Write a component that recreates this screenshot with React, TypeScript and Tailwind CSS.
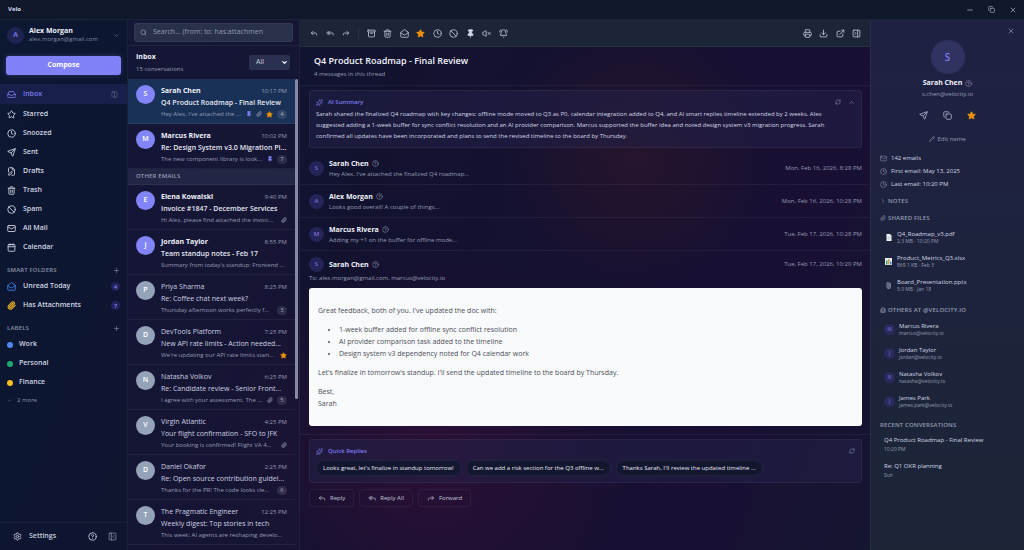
import { useState } from 'react';
import type { ReactNode } from 'react';
import {
    Archive, Ban, BellRing, Building2, Calendar, ChevronDown, ChevronRight, ChevronUp, CircleHelp, Clock,
    Columns2, Copy, Download, ExternalLink, FilePen, Forward, Inbox, Mail, MailOpen, Minus, PanelLeftClose,
    PanelRightClose, Paperclip, Pencil, Pin, Plus, Printer, RefreshCw, Reply, ReplyAll, Search, Send,
    Settings, Sparkles, Star, Trash2, VolumeX, X,
} from 'lucide-react';
import type { LucideIcon } from 'lucide-react';

interface Thread {
    id: number;
    from: string;
    time: string;
    subject: string;
    snippet: string;
    unread?: boolean;
    pinned?: boolean;
    attachment?: boolean;
    starred?: boolean;
    count?: number;
}

const navItems: { label: string; icon: LucideIcon }[] = [
    { label: 'Starred', icon: Star },
    { label: 'Snoozed', icon: Clock },
    { label: 'Sent', icon: Send },
    { label: 'Drafts', icon: FilePen },
    { label: 'Trash', icon: Trash2 },
    { label: 'Spam', icon: Ban },
    { label: 'All Mail', icon: Mail },
    { label: 'Calendar', icon: Calendar },
];

const labels = [
    { name: 'Work', color: 'bg-[#4f86f0]' },
    { name: 'Personal', color: 'bg-[#1fa870]' },
    { name: 'Finance', color: 'bg-[#fbbf24]' },
];

const pinnedThreads: Thread[] = [
    { id: 1, from: 'Sarah Chen', time: '10:17 PM', subject: 'Q4 Product Roadmap - Final Review', snippet: "Hey Alex, I've attached the ...", unread: true, pinned: true, attachment: true, starred: true, count: 4 },
    { id: 2, from: 'Marcus Rivera', time: '10:02 PM', subject: 'Re: Design System v3.0 Migration Pl...', snippet: 'The new component library is look...', unread: true, pinned: true, count: 7 },
];

const otherThreads: Thread[] = [
    { id: 3, from: 'Elena Kowalski', time: '9:40 PM', subject: 'Invoice #1847 - December Services', snippet: 'Hi Alex, please find attached the invoic...', unread: true, attachment: true },
    { id: 4, from: 'Jordan Taylor', time: '8:55 PM', subject: 'Team standup notes - Feb 17', snippet: "Summary from today's standup: Frontend ...", unread: true },
    { id: 5, from: 'Priya Sharma', time: '8:25 PM', subject: 'Re: Coffee chat next week?', snippet: 'Thursday afternoon works perfectly f...', count: 3 },
    { id: 6, from: 'DevTools Platform', time: '7:25 PM', subject: 'New API rate limits - Action needed...', snippet: "We're updating our API rate limits start...", starred: true },
    { id: 7, from: 'Natasha Volkov', time: '6:25 PM', subject: 'Re: Candidate review - Senior Front...', snippet: 'I agree with your assessment. The ...', attachment: true, count: 5 },
    { id: 8, from: 'Virgin Atlantic', time: '4:25 PM', subject: 'Your flight confirmation - SFO to JFK', snippet: 'Your booking is confirmed! Flight VA 4...', attachment: true },
    { id: 9, from: 'Daniel Okafor', time: '2:25 PM', subject: 'Re: Open source contribution guidel...', snippet: 'Thanks for the PR! The code looks cle...', count: 6 },
    { id: 10, from: 'The Pragmatic Engineer', time: '12:25 PM', subject: 'Weekly digest: Top stories in tech', snippet: 'This week: AI agents are reshaping develo...' },
];

const messages = [
    { from: 'Sarah Chen', snippet: "Hey Alex, I've attached the finalized Q4 roadmap...", date: 'Mon, Feb 16, 2026, 8:28 PM' },
    { from: 'Alex Morgan', snippet: 'Looks good overall! A couple of things...', date: 'Mon, Feb 16, 2026, 10:28 PM' },
    { from: 'Marcus Rivera', snippet: 'Adding my +1 on the buffer for offline mode...', date: 'Tue, Feb 17, 2026, 10:28 PM' },
];

const people = [
    { name: 'Marcus Rivera', email: 'marcus@velocity.io' },
    { name: 'Jordan Taylor', email: 'jordan@velocity.io' },
    { name: 'Natasha Volkov', email: 'natasha@velocity.io' },
    { name: 'James Park', email: 'james.park@velocity.io' },
];

function IconButton({ label, children }: { label: string; children: ReactNode }) {
    return (
        <button aria-label={label} className="flex size-4 shrink-0 items-center justify-center rounded text-[#b8bed0] hover:bg-white/10">
            {children}
        </button>
    );
}

function CountBadge({ value }: { value: number }) {
    return (
        <span className="flex size-[9px] shrink-0 items-center justify-center rounded-full bg-[#22225a] text-[6px] leading-none text-[#8583e8]">
            {value}
        </span>
    );
}

function SectionHeader({ title }: { title: string }) {
    return (
        <div className="mt-[6px] flex h-[14px] items-center justify-between px-[7px]">
            <h2 className="text-[6px] font-semibold tracking-wide text-[#8a93a9]">{title}</h2>
            <button aria-label={`Add to ${title.toLowerCase()}`} className="text-[#8a93a9]"><Plus size={7} /></button>
        </div>
    );
}

function Sidebar() {
    return (
        <aside className="flex w-32 shrink-0 flex-col border-r border-white/5 bg-[#0c152e]/60">
            <button className="mt-[2px] flex h-[26px] items-center gap-[5px] px-[7px] text-left">
                <span className="flex size-[17px] shrink-0 items-center justify-center rounded-full bg-[#1f2352] text-[7px] font-semibold text-[#7c7cf0]">A</span>
                <span className="flex min-w-0 flex-1 flex-col">
                    <span className="text-[7px] leading-[9px] font-bold text-[#eef1f8]">Alex Morgan</span>
                    <span className="text-[6px] leading-[9px] text-[#7f89a3]">alex.morgan@gmail.com</span>
                </span>
                <ChevronDown size={7} className="text-[#737d97]" />
            </button>
            <button className="mx-[6px] mt-2 h-[19px] rounded-[3px] bg-[#8181f7] text-[7px] font-bold text-white shadow-[0_0_5px_rgba(129,129,247,0.3)]">
                Compose
            </button>
            <nav className="mt-[9px] flex flex-1 flex-col text-[7px] font-semibold text-[#d0d6e4]">
                <a href="#inbox" className="flex h-5 items-center gap-[7px] bg-[#181f4a] px-[7px] text-[#7c7cf0]">
                    <Inbox size={9} />
                    <span className="flex-1">Inbox</span>
                    <Columns2 size={7} className="mr-[2px] text-[#646d8a]" />
                </a>
                <div className="flex flex-col pt-px">
                    {navItems.map(({ label, icon: Icon }) => (
                        <a key={label} href={`#${label}`} className="flex h-[19px] items-center gap-[7px] px-[7px] hover:bg-white/5">
                            <Icon size={9} strokeWidth={2.3} />
                            {label}
                        </a>
                    ))}
                </div>
                <SectionHeader title="SMART FOLDERS" />
                <a href="#unread" className="flex h-[19px] items-center gap-[7px] px-[7px]">
                    <MailOpen size={9} strokeWidth={2.3} className="text-[#3f82f0]" />
                    <span className="flex-1">Unread Today</span>
                    <CountBadge value={4} />
                </a>
                <a href="#attachments" className="flex h-[19px] items-center gap-[7px] px-[7px]">
                    <Paperclip size={9} strokeWidth={3} className="text-[#eab020]" />
                    <span className="flex-1">Has Attachments</span>
                    <CountBadge value={7} />
                </a>
                <SectionHeader title="LABELS" />
                {labels.map((label) => (
                    <a key={label.name} href={`#${label.name}`} className="flex h-[19px] items-center gap-[6px] px-[7px]">
                        <span className={`size-[6px] rounded-full ${label.color}`} />
                        {label.name}
                    </a>
                ))}
                <button className="flex h-4 items-center gap-[5px] px-[7px] text-[6px] font-normal text-[#8a93a9]">
                    <ChevronDown size={5} />
                    2 more
                </button>
            </nav>
            <footer className="flex h-7 items-center border-t border-white/5 pr-[10px] pl-[13px] text-[#c6cddd]">
                <button className="flex flex-1 items-center gap-[7px] text-[7px] font-semibold">
                    <Settings size={9} strokeWidth={2.3} />
                    Settings
                </button>
                <button aria-label="Help" className="mr-[11px]"><CircleHelp size={9} strokeWidth={2.3} /></button>
                <button aria-label="Collapse sidebar" className="text-[#8a93a9]"><PanelLeftClose size={9} /></button>
            </footer>
        </aside>
    );
}

function ThreadRow({ thread, selected }: { thread: Thread; selected?: boolean }) {
    return (
        <li className={`flex h-[45px] gap-[6px] border-b border-white/5 px-2 pt-[6px] ${selected ? 'bg-[#1a3157]' : ''}`}>
            <span className={`flex size-[19px] shrink-0 items-center justify-center rounded-full text-[7px] font-semibold text-white ${thread.unread ? 'bg-[#8285f7]' : 'bg-[#94a3b8]'}`}>
                {thread.from[0]}
            </span>
            <div className="min-w-0 flex-1 whitespace-nowrap">
                <div className="flex h-3 items-center justify-between gap-1">
                    <span className={`text-[7px] leading-[12px] ${thread.unread ? 'font-bold text-[#eef1f8]' : 'text-[#ccd1e0]'}`}>{thread.from}</span>
                    <span className="text-[6px] leading-[12px] text-[#959cb3]">{thread.time}</span>
                </div>
                <p className={`text-[7px] leading-[12px] ${thread.unread ? 'font-semibold text-[#e4e8f2]' : 'font-medium text-[#ccd1e0]'}`}>{thread.subject}</p>
                <div className="flex h-[10px] items-center gap-1">
                    <span className="flex-1 text-[6px] leading-[10px] text-[#959cb3]">{thread.snippet}</span>
                    {thread.pinned && <Pin size={6} className="shrink-0 fill-current text-[#8285f7]" />}
                    {thread.attachment && <Paperclip size={6} strokeWidth={3} className="shrink-0 text-[#8990a8]" />}
                    {thread.starred && <Star size={7} className="shrink-0 fill-current text-[#e8900c]" />}
                    {thread.count && (
                        <span className="flex h-[9px] w-[10px] shrink-0 items-center justify-center rounded-full bg-white/10 text-[6px] leading-none text-[#a5acc0]">{thread.count}</span>
                    )}
                </div>
            </div>
        </li>
    );
}

function ThreadList() {
    const [filter, setFilter] = useState('All');

    return (
        <section className="flex w-[172px] shrink-0 flex-col border-r border-white/5 bg-[#1a1538]/50">
            <div className="border-b border-white/5 px-[6px] py-[3px]">
                <label className="flex h-[19px] items-center gap-[6px] rounded-[3px] border border-white/5 bg-[#28304a] px-[5px]">
                    <Search size={7} strokeWidth={2.5} className="shrink-0 text-[#959cb3]" />
                    <input
                        type="text"
                        aria-label="Search mail"
                        placeholder="Search... (from: to: has:attachment)"
                        className="w-[110px] bg-transparent text-[7px] text-white outline-none placeholder:text-[#959cb3]"
                    />
                </label>
            </div>
            <header className="flex h-[33px] items-center justify-between pr-[9px] pl-2">
                <div>
                    <h1 className="text-[7px] leading-[12px] font-bold text-[#eef1f8]">Inbox</h1>
                    <p className="text-[6px] leading-[12px] text-[#959cb3]">15 conversations</p>
                </div>
                <div className="relative flex">
                    <select
                        aria-label="Filter"
                        value={filter}
                        onChange={(e) => setFilter(e.target.value)}
                        className="h-[15px] w-[41px] appearance-none rounded-[2px] bg-[#2a3050] pl-[7px] text-[7px] text-[#c9cfdd] outline-none"
                    >
                        <option>All</option>
                        <option>Unread</option>
                    </select>
                    <ChevronDown size={7} strokeWidth={4} className="pointer-events-none absolute top-1 right-[2px] text-white" />
                </div>
            </header>
            <div className="flex min-h-0 flex-1">
                <div className="min-w-0 flex-1 overflow-hidden">
                    <ul>{pinnedThreads.map((t, i) => <ThreadRow key={t.id} thread={t} selected={i === 0} />)}</ul>
                    <h2 className="flex h-4 items-center border-b border-white/5 bg-[#222644] px-2 text-[6px] font-semibold tracking-wide text-[#959cb3]">OTHER EMAILS</h2>
                    <ul>{otherThreads.map((t) => <ThreadRow key={t.id} thread={t} />)}</ul>
                </div>
                <div className="w-1">
                    <div className="h-[68%] w-[3px] rounded-full bg-[#8589a4]" />
                </div>
            </div>
        </section>
    );
}

function Toolbar() {
    return (
        <div className="flex h-[27px] items-center border-b border-white/5 bg-[#1c2438] pr-[5px] pl-[6px]">
            <IconButton label="Reply"><Reply size={8} strokeWidth={2.5} /></IconButton>
            <IconButton label="Reply all"><ReplyAll size={8} strokeWidth={2.5} /></IconButton>
            <IconButton label="Forward"><Forward size={8} strokeWidth={2.5} /></IconButton>
            <span className="mx-[4px] h-3 w-px bg-white/5" />
            <div className="flex w-[148px] justify-between">
                <IconButton label="Archive"><Archive size={9} strokeWidth={2.3} /></IconButton>
                <IconButton label="Delete"><Trash2 size={9} strokeWidth={2.3} /></IconButton>
                <IconButton label="Mark unread"><MailOpen size={9} strokeWidth={2.3} /></IconButton>
                <IconButton label="Star"><Star size={9} className="fill-current text-[#e8900c]" /></IconButton>
                <IconButton label="Snooze"><Clock size={9} strokeWidth={2.3} /></IconButton>
                <IconButton label="Spam"><Ban size={9} strokeWidth={2.3} /></IconButton>
                <IconButton label="Pin"><Pin size={9} className="fill-current text-[#d5daf0]" /></IconButton>
                <IconButton label="Mute"><VolumeX size={9} strokeWidth={2.3} /></IconButton>
                <IconButton label="Remind me"><BellRing size={9} strokeWidth={2.3} /></IconButton>
            </div>
            <div className="ml-auto flex w-[66px] justify-between">
                <IconButton label="Print"><Printer size={9} strokeWidth={2.3} /></IconButton>
                <IconButton label="Download"><Download size={9} strokeWidth={2.3} /></IconButton>
                <IconButton label="Open in window"><ExternalLink size={9} strokeWidth={2.3} /></IconButton>
                <IconButton label="Hide contact"><PanelRightClose size={9} strokeWidth={2.3} /></IconButton>
            </div>
        </div>
    );
}

function MessageAvatar({ name }: { name: string }) {
    return (
        <span className="flex size-[15px] shrink-0 items-center justify-center rounded-full bg-[#252458] text-[6px] font-semibold text-[#7472dd]">{name[0]}</span>
    );
}

function SenderName({ name }: { name: string }) {
    return (
        <span className="flex items-center gap-[3px] text-[7px] leading-[10px] font-bold text-[#eef1f8]">
            {name}
            <CircleHelp size={7} className="text-[#8a91a9]" />
        </span>
    );
}

function ThreadView() {
    return (
        <main className="flex min-w-0 flex-1 flex-col">
            <Toolbar />
            <header className="flex h-[39px] flex-col justify-center border-b border-white/5 pl-[14px]">
                <h1 className="text-[9px] leading-[15px] font-semibold text-[#f1f3fa]">Q4 Product Roadmap - Final Review</h1>
                <p className="text-[6px] leading-[12px] text-[#959cb3]">4 messages in this thread</p>
            </header>
            <section className="mt-1 mr-2 ml-[9px] rounded-[3px] border border-white/5 bg-[#23214a]/50 px-[6px] pt-[5px] pb-[5px]">
                <div className="flex h-[12px] items-center gap-[5px] text-[#7c7cf0]">
                    <Sparkles size={7} />
                    <h2 className="flex-1 text-[6px] font-semibold">AI Summary</h2>
                    <button aria-label="Refresh summary" className="mr-[2px] text-[#8a91a9]"><RefreshCw size={6} /></button>
                    <button aria-label="Collapse summary" className="text-[#8a91a9]"><ChevronUp size={7} /></button>
                </div>
                <p className="mt-px pr-4 text-[6px] leading-[11px] text-[#d2d7e4]">
                    Sarah shared the finalized Q4 roadmap with key changes: offline mode moved to Q3 as P0, calendar integration added to Q4, and AI smart replies timeline extended by 2 weeks. Alex suggested adding a 1-week buffer for sync conflict resolution and an AI provider comparison. Marcus supported the buffer idea and noted design system v3 migration progress. Sarah confirmed all updates have been incorporated and plans to send the revised timeline to the board by Thursday.
                </p>
            </section>
            <div className="mt-1">
                {messages.map((m) => (
                    <article key={m.from} className="flex h-[33px] items-center gap-[5px] border-b border-white/5 pt-px pr-2 pl-[9px]">
                        <MessageAvatar name={m.from} />
                        <div className="flex-1">
                            <SenderName name={m.from} />
                            <p className="text-[6px] leading-[10px] text-[#959cb3]">{m.snippet}</p>
                        </div>
                        <time className="text-[6px] text-[#959cb3]">{m.date}</time>
                    </article>
                ))}
            </div>
            <article className="border-b border-white/5 pt-[6px] pr-2 pb-2 pl-[9px]">
                <div className="flex items-center gap-[5px]">
                    <MessageAvatar name="Sarah Chen" />
                    <div className="flex-1"><SenderName name="Sarah Chen" /></div>
                    <time className="text-[6px] text-[#959cb3]">Tue, Feb 17, 2026, 10:20 PM</time>
                </div>
                <p className="mt-px text-[6px] leading-[10px] text-[#959cb3]">To: alex.morgan@gmail.com, marcus@velocity.io</p>
                <div className="mt-[5px] rounded-[3px] bg-[#f9fafc] px-[9px] pt-[17px] pb-4 text-[7px] leading-[12px] text-[#4b4f57]">
                    <p>Great feedback, both of you. I've updated the doc with:</p>
                    <ul className="my-[7px] list-disc pl-[21px]">
                        <li>1-week buffer added for offline sync conflict resolution</li>
                        <li>AI provider comparison task added to the timeline</li>
                        <li>Design system v3 dependency noted for Q4 calendar work</li>
                    </ul>
                    <p>Let's finalize in tomorrow's standup. I'll send the updated timeline to the board by Thursday.</p>
                    <p className="mt-[7px]">Best,<br />Sarah</p>
                </div>
            </article>
            <section className="mt-1 mr-2 ml-[9px] rounded-[3px] border border-white/5 bg-[#23214a]/50 px-[6px] pt-[5px] pb-[6px]">
                <div className="flex h-[12px] items-center gap-[5px] text-[#7c7cf0]">
                    <Sparkles size={7} />
                    <h2 className="flex-1 text-[6px] font-semibold">Quick Replies</h2>
                    <button aria-label="Refresh replies" className="text-[#8a91a9]"><RefreshCw size={6} /></button>
                </div>
                <div className="mt-[3px] flex gap-[5px] text-[6px] font-medium text-[#e6e9f2]">
                    <button className="h-4 rounded-full border border-white/5 bg-[#12162f] px-[6px]">Looks great, let's finalize in standup tomorrow!</button>
                    <button className="h-4 rounded-full border border-white/5 bg-[#12162f] px-[6px]">Can we add a risk section for the Q3 offline w...</button>
                    <button className="h-4 rounded-full border border-white/5 bg-[#12162f] px-[6px]">Thanks Sarah, I'll review the updated timeline ...</button>
                </div>
            </section>
            <div className="mt-[6px] mr-2 ml-[9px] flex gap-[5px] text-[6px] font-medium text-[#c3c9d9]">
                <button className="flex h-[18px] items-center gap-1 rounded border border-white/5 px-2"><Reply size={8} />Reply</button>
                <button className="flex h-[18px] items-center gap-1 rounded border border-white/5 px-2"><ReplyAll size={8} />Reply All</button>
                <button className="flex h-[18px] items-center gap-1 rounded border border-white/5 px-2"><Forward size={8} />Forward</button>
            </div>
        </main>
    );
}

function PageGlyph() {
    return (
        <svg viewBox="0 0 12 14" className="h-[7px] w-[6px]">
            <path d="M1 0h7l3 3v11H1z" fill="#f3f5fa" />
            <path d="M8 0v3h3M3 6h6M3 8h6M3 10h6" fill="none" stroke="#9aa5bb" />
        </svg>
    );
}

function ChartGlyph() {
    return (
        <svg viewBox="0 0 14 14" className="size-[7px]">
            <rect width="14" height="14" fill="#e9eef6" />
            <rect x="2" y="5" width="3" height="8" fill="#3f9e57" />
            <rect x="6" y="2" width="3" height="11" fill="#d9a04a" />
            <rect x="10" y="7" width="3" height="6" fill="#3c86dd" />
        </svg>
    );
}

function ContactPanel() {
    const files = [
        { name: 'Q4_Roadmap_v3.pdf', meta: '2.3 MB · 10:20 PM', glyph: <PageGlyph /> },
        { name: 'Product_Metrics_Q3.xlsx', meta: '869.1 KB · Feb 3', glyph: <ChartGlyph /> },
        { name: 'Board_Presentation.pptx', meta: '5.0 MB · Jan 18', glyph: <Paperclip size={7} className="-rotate-45 text-[#b8bed0]" /> },
    ];

    return (
        <aside className="flex w-[154px] shrink-0 flex-col border-l border-white/5 bg-linear-to-b from-[#1f2143] to-[#1b2536] px-[9px] text-[#959cb3]">
            <button aria-label="Close panel" className="mt-[7px] self-end"><X size={8} /></button>
            <div className="mt-[5px] flex flex-col items-center">
                <span className="flex size-[34px] items-center justify-center rounded-full bg-[#30325f] text-[10px] font-semibold text-[#7c7cf0]">S</span>
                <div className="mt-1"><SenderName name="Sarah Chen" /></div>
                <p className="mt-px text-[6px] leading-[11px]">s.chen@velocity.io</p>
                <div className="mt-[7px] flex gap-2">
                    <IconButton label="Send email"><Send size={9} /></IconButton>
                    <IconButton label="Copy address"><Copy size={9} /></IconButton>
                    <IconButton label="VIP"><Star size={9} className="fill-current text-[#e8900c]" /></IconButton>
                </div>
                <button className="mt-[11px] flex h-[10px] items-center gap-[2px] text-[6px]"><Pencil size={6} />Edit name</button>
            </div>
            <ul className="mt-2 text-[6px] font-medium text-[#d2d7e4]">
                <li className="flex h-[13px] items-center gap-[4px]"><Mail size={7} className="text-[#8a91a9]" />142 emails</li>
                <li className="flex h-[13px] items-center gap-[4px]"><Clock size={7} className="text-[#8a91a9]" />First email: May 13, 2025</li>
                <li className="flex h-[13px] items-center gap-[4px]"><Clock size={7} className="text-[#8a91a9]" />Last email: 10:20 PM</li>
            </ul>
            <button className="mt-[5px] flex h-[10px] items-center gap-[2px] text-[6px] font-semibold tracking-wide"><ChevronRight size={6} />NOTES</button>
            <h3 className="mt-[7px] flex h-[10px] items-center gap-[2px] text-[6px] font-semibold tracking-wide"><Paperclip size={6} />SHARED FILES</h3>
            <ul>
                {files.map((f) => (
                    <li key={f.name} className="flex h-6 items-center gap-[5px] pt-[5px] pl-[5px]">
                        <span className="flex w-[7px] justify-center">{f.glyph}</span>
                        <div>
                            <a href={`#${f.name}`} className="block text-[6px] leading-[8px] font-medium text-[#d2d7e4]">{f.name}</a>
                            <p className="text-[5px] leading-[7px]">{f.meta}</p>
                        </div>
                    </li>
                ))}
            </ul>
            <h3 className="mt-[10px] flex h-[10px] items-center gap-[2px] text-[6px] font-semibold tracking-wide"><Building2 size={6} />OTHERS AT @VELOCITY.IO</h3>
            <ul>
                {people.map((p) => (
                    <li key={p.name} className="flex h-6 items-center gap-[4px] pt-[5px] pl-[4px]">
                        <span className="flex size-[11px] items-center justify-center rounded-full bg-[#2a2b5c] text-[5px] font-semibold text-[#6765c8]">{p.name[0]}</span>
                        <div>
                            <p className="text-[6px] leading-[8px] font-medium text-[#d2d7e4]">{p.name}</p>
                            <p className="text-[5px] leading-[7px]">{p.email}</p>
                        </div>
                    </li>
                ))}
            </ul>
            <h3 className="mt-[9px] h-[10px] text-[6px] leading-[10px] font-semibold tracking-wide">RECENT CONVERSATIONS</h3>
            <ul className="pl-[4px]">
                <li className="mt-[6px] h-5">
                    <a href="#roadmap" className="block text-[6px] leading-[9px] font-medium text-[#d2d7e4]">Q4 Product Roadmap - Final Review</a>
                    <p className="text-[5px] leading-[8px]">10:20 PM</p>
                </li>
                <li className="mt-[6px] h-5">
                    <a href="#okr" className="block text-[6px] leading-[9px] font-medium text-[#d2d7e4]">Re: Q1 OKR planning</a>
                    <p className="text-[5px] leading-[8px]">Sun</p>
                </li>
            </ul>
        </aside>
    );
}

export default function App() {
    return (
        <div className="flex h-screen flex-col overflow-hidden bg-[#12122d] bg-[radial-gradient(circle_at_42%_82%,#2b0f35_0%,transparent_27%),radial-gradient(circle_at_62%_28%,#26152c_0%,transparent_18%),linear-gradient(110deg,#0e1a36_0%,#12122f_35%,#190f33_72%,#101a2e_100%)] font-['Open_Sans','Noto_Sans',sans-serif]">
            <header className="flex h-5 shrink-0 items-center justify-between border-b border-white/5 bg-[#0f172a] pr-[7px] pl-2">
                <span className="text-[6px] font-bold text-[#d5daf0]">Velo</span>
                <div className="flex gap-[14px] text-[#b8bed0]">
                    <button aria-label="Minimize"><Minus size={8} /></button>
                    <button aria-label="Restore"><Copy size={7} /></button>
                    <button aria-label="Close"><X size={8} /></button>
                </div>
            </header>
            <div className="flex min-h-0 flex-1">
                <Sidebar />
                <ThreadList />
                <ThreadView />
                <ContactPanel />
            </div>
        </div>
    );
}
